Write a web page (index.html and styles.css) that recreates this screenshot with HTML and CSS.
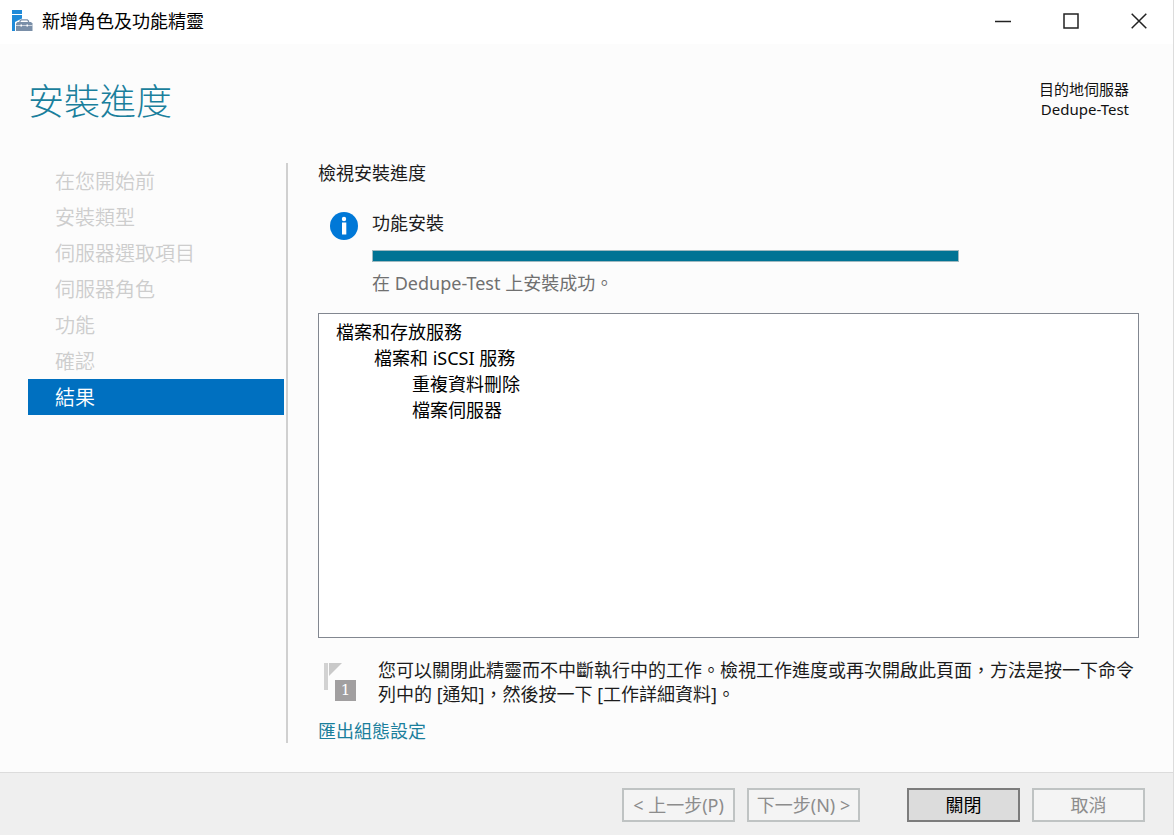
FILE: index.html
```html
<!DOCTYPE html>
<html lang="zh-Hant">
<head>
<meta charset="utf-8">
<meta name="viewport" content="width=device-width, initial-scale=1">
<title>新增角色及功能精靈</title>
<link rel="stylesheet" href="styles.css">
</head>
<body>
<div class="window">
  <header class="titlebar">
    <svg class="app-icon" viewBox="0 0 22 22" aria-hidden="true">
      <path fill="#1f8ad8" d="M1 0h10v4H1zM1 5h10v3.500L4 12v9H1z"/>
      <path fill="none" stroke="#7a8fa8" stroke-width="1.300" d="M9 12.500v-1.500l1.300-1.200h6l1.200 1.200v1.500"/>
      <path fill="#7a8fa8" d="M5 13.500l1.500-1.500h13.500l1.500 1.500V21H5z"/>
      <path stroke="#dfe5ec" stroke-width=".8" d="M5 15.500h16.500"/>
      <path fill="#fff" d="M9.500 14.500h1.500v2H9.500zM15.500 14.500h1.500v2h-1.500z"/>
    </svg>
    <span class="caption">新增角色及功能精靈</span>
    <div class="window-controls">
      <button class="control" type="button" aria-label="最小化"><svg viewBox="0 0 16 16"><path d="M0 8.500h16"/></svg></button>
      <button class="control" type="button" aria-label="最大化"><svg viewBox="0 0 16 16"><path d="M1 1h14v14H1z"/></svg></button>
      <button class="control" type="button" aria-label="關閉視窗"><svg viewBox="0 0 16 16"><path d="M.7.7l14.600 14.600M15.300.7L.7 15.300"/></svg></button>
    </div>
  </header>

  <div class="heading">
    <h1 class="page-title">安裝進度</h1>
    <p class="destination">目的地伺服器<br>Dedupe-Test</p>
  </div>

  <div class="body">
    <nav class="steps" aria-label="步驟">
      <ol class="step-list">
        <li class="step">在您開始前</li>
        <li class="step">安裝類型</li>
        <li class="step">伺服器選取項目</li>
        <li class="step">伺服器角色</li>
        <li class="step">功能</li>
        <li class="step">確認</li>
        <li class="step current" aria-current="step">結果</li>
      </ol>
    </nav>

    <main class="content">
      <p class="intro">檢視安裝進度</p>
      <section class="task">
        <svg class="info-icon" viewBox="0 0 28 28" aria-hidden="true">
          <circle cx="14" cy="14" r="14" fill="#0078d7"/>
          <circle cx="14" cy="7" r="2.200" fill="#fff"/>
          <path fill="#fff" d="M12 10.500h4.300v12H12z"/>
        </svg>
        <div class="task-detail">
          <label for="install">功能安裝</label>
          <progress id="install" class="bar" max="100" value="100"></progress>
          <p class="status">在 Dedupe-Test 上安裝成功。</p>
        </div>
      </section>

      <div class="results">
        <ul class="tree">
          <li>檔案和存放服務
            <ul class="tree">
              <li>檔案和 iSCSI 服務
                <ul class="tree">
                  <li>重複資料刪除</li>
                  <li>檔案伺服器</li>
                </ul>
              </li>
            </ul>
          </li>
        </ul>
      </div>

      <div class="note">
        <div class="flag">
          <svg class="flag-icon" viewBox="0 0 32 38" aria-hidden="true">
            <path fill="#d2d2d2" d="M0 0h4v27H0z"/>
            <path fill="#c9c9c9" d="M5 0h13L5 13z"/>
          </svg>
          <span class="flag-count">1</span>
        </div>
        <p class="note-text">您可以關閉此精靈而不中斷執行中的工作。檢視工作進度或再次開啟此頁面，方法是按一下命令列中的 [通知]，然後按一下 [工作詳細資料]。</p>
      </div>
      <a class="export" href="#export">匯出組態設定</a>
    </main>
  </div>

  <footer class="actions">
    <button class="button" type="button" disabled>&lt; 上一步(P)</button>
    <button class="button" type="button" disabled>下一步(N) &gt;</button>
    <button class="button primary" type="button">關閉</button>
    <button class="button" type="button" disabled>取消</button>
  </footer>
</div>
</body>
</html>
```
FILE: styles.css
```css
* {
  box-sizing: border-box;
}

body {
  margin: 0;
  background: #fcfcfc;
  color: #1c1c1c;
  font: 18px/24px "Noto Sans", "Noto Sans CJK TC", sans-serif;
}

h1, p, ul, ol {
  margin: 0;
  padding: 0;
}

ul, ol {
  list-style: none;
}

.window {
  display: flex;
  flex-direction: column;
  min-height: 100vh;
  border-right: 1px solid #dcdcdc;
}

.titlebar {
  display: flex;
  align-items: center;
  height: 44px;
  padding: 0 0 2px 11px;
  background: #fff;
  color: #000;
}

.app-icon {
  width: 22px;
  height: 22px;
  margin-right: 9px;
}

.window-controls {
  display: flex;
  align-self: stretch;
  margin-left: auto;
}

.control {
  display: flex;
  align-items: center;
  justify-content: center;
  width: 68px;
  padding: 0;
  border: 0;
  background: none;
}

.control svg {
  width: 16px;
  height: 16px;
  fill: none;
  stroke: #222;
  stroke-width: 1.5;
}

.heading {
  display: flex;
  justify-content: space-between;
  height: 119px;
  padding: 35px 44px 0 28px;
}

.page-title {
  color: #1a7f9c;
  font-family: "Noto Sans CJK TC Light", "Noto Sans CJK TC", sans-serif;
  font-size: 36px;
  font-weight: 300;
  line-height: 40px;
}

.destination {
  color: #111;
  font-size: 15px;
  line-height: 20px;
  text-align: right;
}

.body {
  display: flex;
  flex: 1;
  padding: 0 34px 29px 28px;
}

.steps {
  flex: 0 0 260px;
  padding-right: 2px;
  border-right: 2px solid #d0d0d0;
}

.step {
  height: 36px;
  padding: 2px 0 0 27px;
  color: #cdcdcd;
  font-family: "Noto Sans CJK TC DemiLight", "Noto Sans CJK TC", sans-serif;
  font-size: 20px;
  font-weight: 350;
  line-height: 32px;
}

.step.current {
  background: #0070c0;
  color: #fff;
}

.content {
  display: flex;
  flex: 1;
  flex-direction: column;
  min-width: 0;
  padding-left: 30px;
}

.intro {
  line-height: 20px;
}

.task {
  display: flex;
  gap: 14px;
  margin-top: 28px;
  padding-left: 12px;
}

.info-icon {
  flex: none;
  width: 28px;
  height: 28px;
  margin-top: 1px;
}

.task-detail {
  display: flex;
  flex: 0 1 587px;
  flex-direction: column;
}

.bar {
  width: 100%;
  height: 12px;
  margin: 15px 0 9px;
  border: 1px solid #9fb9c0;
  background: #e6e6e6;
  appearance: none;
}

.bar::-webkit-progress-bar {
  background: #e6e6e6;
}

.bar::-webkit-progress-value {
  background: #007394;
}

.status {
  color: #707070;
}

.results {
  flex: 1;
  margin: 18px 0 20px;
  padding: 5px 17px;
  border: 1px solid #828790;
  background: #fff;
  color: #000;
  line-height: 26px;
}

.tree .tree {
  padding-left: 38px;
}

.note {
  display: flex;
  gap: 22px;
  padding-left: 6px;
}

.flag {
  position: relative;
  flex: none;
  width: 32px;
  height: 38px;
  margin-top: 5px;
}

.flag-icon {
  display: block;
  width: 32px;
  height: 38px;
}

.flag-count {
  position: absolute;
  right: 0;
  bottom: 0;
  width: 21px;
  height: 21px;
  background: #a19fa0;
  color: #fff;
  font: 15px/21px "DejaVu Serif", serif;
  text-align: center;
}

.export {
  align-self: flex-start;
  margin-top: 13px;
  color: #1a7f9c;
  text-decoration: none;
}

.actions {
  display: flex;
  justify-content: flex-end;
  gap: 12px;
  padding: 15px 28px 13px;
  border-top: 1px solid #dcdcdc;
  background: #efefef;
}

.button {
  width: 113px;
  height: 34px;
  padding: 0;
  border: 2px solid #bfc3c3;
  background: #f4f4f4;
  color: #8c8c8c;
  font: inherit;
  white-space: nowrap;
}

.button.primary {
  margin-left: 35px;
  border-color: #7c7c7c;
  background: #dcdcdc;
  color: #000;
}
```
